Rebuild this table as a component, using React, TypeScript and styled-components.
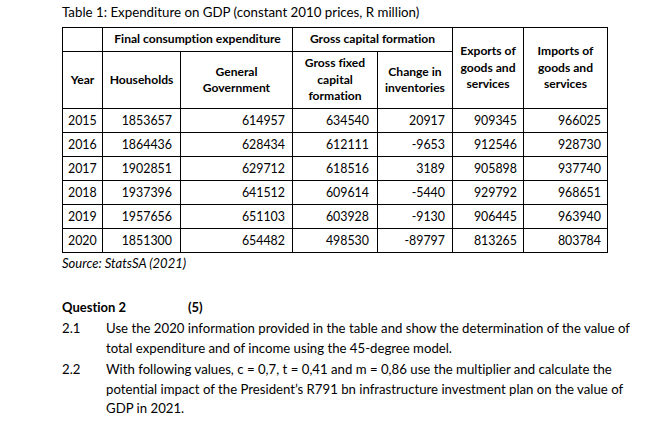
import React from "react";
import styled, { createGlobalStyle } from "styled-components";

const Global = createGlobalStyle`
  html, body { margin: 0; padding: 0; background: #fff; }
  body {
    font-family: Lato, "Open Sans", sans-serif;
    color: #000;
    font-variant-ligatures: none;
    font-feature-settings: "liga" 0;
  }
`;

const Page = styled.div`
  width: 669px;
  height: 424px;
  box-sizing: border-box;
  padding: 5px 0 0 62px;
  overflow: hidden;
`;

const Title = styled.div`
  font-size: 13.3px;
  line-height: 15px;
  height: 22px;
`;

const Table = styled.table`
  border-collapse: collapse;
  table-layout: fixed;
  width: 545px;
  font-size: 12.1px;
  border: 1px solid #000;
  td, th { border: 1px solid #000; padding: 0; }
`;

const HeadCell = styled.th<{ $h?: number }>`
  font-weight: 700;
  text-align: center;
  vertical-align: middle;
  line-height: 16.5px;
  height: ${(p) => (p.$h ? `${p.$h}px` : "auto")};
  box-sizing: border-box;
`;

const Cell = styled.td<{ $left?: boolean; $pad?: number }>`
  height: 23px;
  text-align: ${(p) => (p.$left ? "left" : "right")};
  padding: 0 ${(p) => (p.$left ? 0 : p.$pad ?? 7)}px 0 ${(p) => (p.$left ? 5 : 0)}px !important;
  vertical-align: middle;
  font-size: 12.4px;
`;

const Source = styled.div`
  font-style: italic;
  font-size: 13px;
  line-height: 15px;
  margin-top: 3px;
`;

const Question = styled.div`
  margin-top: 29px;
  display: flex;
  font-weight: 700;
  font-size: 13px;
  line-height: 15px;
`;

const QLabel = styled.span`
  width: 126px;
`;

const Item = styled.div<{ $gap: number }>`
  display: grid;
  grid-template-columns: 44px 540px;
  margin-top: ${(p) => p.$gap}px;
  font-size: 13.2px;
  line-height: 19.5px;
`;

const cols = [40, 78, 112, 85, 75, 71, 84];

const rows: [string, string, string, string, string, string, string][] = [
  ["2015", "1853657", "614957", "634540", "20917", "909345", "966025"],
  ["2016", "1864436", "628434", "612111", "-9653", "912546", "928730"],
  ["2017", "1902851", "629712", "618516", "3189", "905898", "937740"],
  ["2018", "1937396", "641512", "609614", "-5440", "929792", "968651"],
  ["2019", "1957656", "651103", "603928", "-9130", "906445", "963940"],
  ["2020", "1851300", "654482", "498530", "-89797", "813265", "803784"],
];

const pads = [0, 8, 7, 8, 7, 6, 6];

export default function App() {
  return (
    <>
      <Global />
      <Page>
        <Title>Table 1: Expenditure on GDP (constant 2010 prices, R million)</Title>
        <Table>
          <colgroup>
            {cols.map((w, i) => (
              <col key={i} style={{ width: w }} />
            ))}
          </colgroup>
          <thead>
            <tr>
              <HeadCell $h={24}></HeadCell>
              <HeadCell colSpan={2}>Final consumption expenditure</HeadCell>
              <HeadCell colSpan={2}>Gross capital formation</HeadCell>
              <HeadCell rowSpan={2}>
                Exports of
                <br />
                goods and
                <br />
                services
              </HeadCell>
              <HeadCell rowSpan={2}>
                Imports of
                <br />
                goods and
                <br />
                services
              </HeadCell>
            </tr>
            <tr>
              <HeadCell $h={57}>Year</HeadCell>
              <HeadCell>Households</HeadCell>
              <HeadCell>
                General
                <br />
                Government
              </HeadCell>
              <HeadCell>
                Gross fixed
                <br />
                capital
                <br />
                formation
              </HeadCell>
              <HeadCell>
                Change in
                <br />
                inventories
              </HeadCell>
            </tr>
          </thead>
          <tbody>
            {rows.map((r) => (
              <tr key={r[0]}>
                {r.map((v, i) => (
                  <Cell key={i} $left={i === 0} $pad={pads[i]}>
                    {v}
                  </Cell>
                ))}
              </tr>
            ))}
          </tbody>
        </Table>
        <Source>Source: StatsSA (2021)</Source>
        <Question>
          <QLabel>Question 2</QLabel>
          <span>(5)</span>
        </Question>
        <Item $gap={4}>
          <span>2.1</span>
          <span>
            Use the 2020 information provided in the table and show the determination of the value of
            <br />
            total expenditure and of income using the 45-degree model.
          </span>
        </Item>
        <Item $gap={2}>
          <span>2.2</span>
          <span>
            With following values, c = 0,7, t = 0,41 and m = 0,86 use the multiplier and calculate the
            <br />
            potential impact of the President’s R791 bn infrastructure investment plan on the value of
            <br />
            GDP in 2021.
          </span>
        </Item>
      </Page>
    </>
  );
}
